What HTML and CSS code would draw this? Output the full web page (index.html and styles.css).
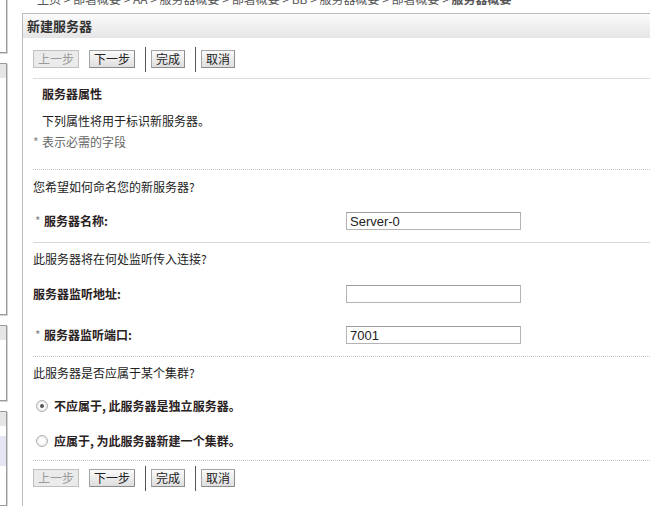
FILE: index.html
```html
<!DOCTYPE html>
<html lang="zh-CN">
<head>
    <meta charset="UTF-8">
    <title>新建服务器</title>
    <link rel="stylesheet" href="styles.css">
</head>
<body>
<div class="page">
    <div class="side">
        <div class="box box-a"></div>
        <div class="box box-b"><div class="box-head"></div></div>
        <div class="box box-c"><div class="box-head"></div></div>
        <div class="box box-d"><div class="box-head"></div><div class="box-sel"></div></div>
    </div>

    <div class="main">
        <div class="crumbs">
            主页 &gt; 部署概要 &gt; AA &gt; 服务器概要 &gt; 部署概要 &gt; BB &gt; 服务器概要 &gt; 部署概要 &gt; <b>服务器概要</b>
        </div>

        <div class="panel">
            <div class="panel-title">新建服务器</div>
            <div class="panel-body">
                <div class="toolbar">
                    <span class="btn disabled">上一步</span>
                    <span class="btn">下一步</span>
                    <span class="sep"></span>
                    <span class="btn">完成</span>
                    <span class="sep"></span>
                    <span class="btn">取消</span>
                </div>

                <div class="intro">
                    <div class="heading">服务器属性</div>
                    <div class="desc">下列属性将用于标识新服务器。</div>
                    <div class="req"><span class="star">*</span>表示必需的字段</div>
                </div>

                <div class="section dotted">
                    <div class="question">您希望如何命名您的新服务器?</div>
                    <div class="field first">
                        <label class="label"><span class="star">*</span>服务器名称:</label>
                        <input class="text" type="text" value="Server-0">
                    </div>
                </div>

                <div class="section solid">
                    <div class="question">此服务器将在何处监听传入连接?</div>
                    <div class="field first">
                        <label class="label plain">服务器监听地址:</label>
                        <input class="text" type="text" value="">
                    </div>
                    <div class="field second">
                        <label class="label"><span class="star">*</span>服务器监听端口:</label>
                        <input class="text" type="text" value="7001">
                    </div>
                </div>

                <div class="section dotted cluster">
                    <div class="question">此服务器是否应属于某个集群?</div>
                    <div class="choice first">
                        <span class="radio checked"></span>不应属于, 此服务器是独立服务器。
                    </div>
                    <div class="choice second">
                        <span class="radio"></span>应属于, 为此服务器新建一个集群。
                    </div>
                </div>

                <div class="toolbar bottom">
                    <span class="btn disabled">上一步</span>
                    <span class="btn">下一步</span>
                    <span class="sep"></span>
                    <span class="btn">完成</span>
                    <span class="sep"></span>
                    <span class="btn">取消</span>
                </div>
            </div>
        </div>
    </div>
</div>
</body>
</html>
```

FILE: styles.css
```css
body {
    margin: 0;
    font-family: "Noto Sans CJK SC", "Liberation Sans", sans-serif;
    font-size: 12px;
    color: #222;
    background: #fff;
}
.page {
    display: flex;
    height: 506px;
    overflow: hidden;
}

/* left navigation, mostly cut off */
.side {
    width: 22px;
    flex: none;
    display: flex;
    flex-direction: column;
}
.box {
    box-sizing: border-box;
    width: 10px;
    margin-left: -3px;
    margin-top: 10px;
    border: 1px solid #9a9a9a;
    box-shadow: 1px 1px 0 #d4d4d4;
    background: #fff;
}
.box-a {
    margin-top: -10px;
    height: 66px;
}
.box-b { height: 265px; }
.box-c { height: 80px; }
.box-d { height: 100px; }
.box-head {
    height: 14px;
    background: #e6e6e6;
}
.box-sel {
    height: 30px;
    margin-top: 10px;
    background: #e4e6f4;
}

.main {
    flex: 1;
    min-width: 0;
}
.crumbs {
    margin-top: -9px;
    height: 16px;
    line-height: 16px;
    padding-left: 15px;
    color: #555;
    white-space: nowrap;
}
.panel {
    margin-top: 6px;
    border-top: 1px solid #bcbcbc;
    border-left: 1px solid #bcbcbc;
    height: 500px;
}
.panel-title {
    height: 24px;
    line-height: 24px;
    padding-left: 4px;
    font-size: 13px;
    font-weight: bold;
    color: #333;
    background: linear-gradient(#fbfbfb, #e5e5e5);
}
.panel-body {
    padding-left: 10px;
}

.toolbar {
    display: flex;
    align-items: center;
    height: 28px;
    padding-top: 7px;
    padding-bottom: 5px;
    border-bottom: 1px solid #dcdcdc;
}
.toolbar.bottom {
    border-bottom: none;
    padding-top: 3px;
}
.btn {
    box-sizing: border-box;
    height: 18px;
    line-height: 16px;
    padding: 0 4px;
    margin-right: 10px;
    border: 1px solid #a4a4a4;
    border-right-color: #8c8c8c;
    border-bottom-color: #8c8c8c;
    background: linear-gradient(#fafafa, #dedede);
    color: #222;
}
.btn.disabled {
    color: #9a9a9a;
    background: #ebebeb;
    border-color: #c0c0c0;
}
.sep {
    width: 1px;
    height: 25px;
    background: #555;
    margin-right: 5px;
}

.intro {
    padding: 6px 0 18px 9px;
    line-height: 18px;
}
.heading {
    font-weight: bold;
    color: #2a2222;
}
.desc {
    margin-top: 9px;
}
.req {
    margin-top: 3px;
    margin-left: -9px;
    color: #666;
}
.req .star {
    display: inline-block;
    width: 9px;
}
.star {
    color: #888;
    font-weight: normal;
}

.section {
    line-height: 18px;
    padding-top: 8px;
    padding-bottom: 12px;
}
.section.dotted {
    border-top: 1px dotted #c4c4c4;
}
.section.solid {
    border-top: 1px solid #d8d8d8;
    padding-top: 7px;
}
.section.cluster {
    padding-top: 7px;
    padding-bottom: 10px;
    border-bottom: 1px dotted #c4c4c4;
}

.field {
    display: grid;
    grid-template-columns: 313px 175px;
    align-items: center;
    height: 18px;
}
.field.first { margin-top: 16px; }
.field.second { margin-top: 23px; }
.section.solid .field.first { margin-top: 17px; }
.label {
    font-weight: bold;
    color: #2a2222;
    padding-left: 2px;
}
.label .star {
    display: inline-block;
    width: 9px;
}
.label.plain {
    padding-left: 0;
}
.text {
    box-sizing: border-box;
    width: 175px;
    height: 18px;
    margin: 0;
    padding: 0 3px;
    border: 1px solid #b4b4b4;
    border-top-color: #9c9c9c;
    font-family: "Liberation Sans", Arial, sans-serif;
    font-size: 13px;
    color: #222;
    background: #fff;
}

.choice {
    display: flex;
    align-items: center;
    height: 18px;
    padding-left: 3px;
    font-weight: bold;
    color: #2a2222;
}
.choice.first { margin-top: 15px; }
.choice.second { margin-top: 17px; }
.radio {
    box-sizing: border-box;
    width: 12px;
    height: 12px;
    margin-right: 6px;
    border-radius: 50%;
    border: 1px solid #b0b0b0;
    background: radial-gradient(#ffffff 30%, #dcdcdc);
    display: flex;
    align-items: center;
    justify-content: center;
}
.radio.checked::after {
    content: "";
    width: 4px;
    height: 4px;
    border-radius: 50%;
    background: #555;
}
```
